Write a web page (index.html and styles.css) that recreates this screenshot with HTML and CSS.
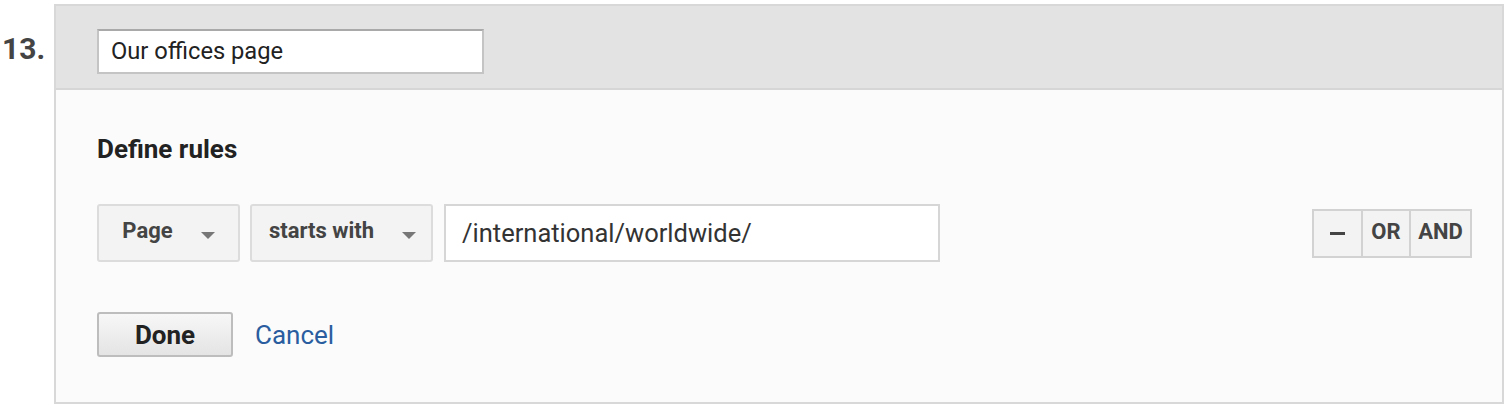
FILE: index.html
```html
<!DOCTYPE html>
<html>
<head>
<meta charset="utf-8">
<link rel="stylesheet" href="styles.css">
</head>
<body>
<div class="item">
  <div class="num">13.</div>
  <div class="panel">
    <div class="panel-head">
      <div class="name-input">Our offices page</div>
    </div>
    <div class="panel-body">
      <div class="title">Define rules</div>
      <div class="rule-row">
        <div class="select sel-page"><span>Page</span><i class="caret"></i></div>
        <div class="select sel-op"><span>starts with</span><i class="caret"></i></div>
        <div class="value-input">/international/worldwide/</div>
        <div class="spacer"></div>
        <div class="btn-group">
          <div class="gbtn minus"><i class="bar"></i></div>
          <div class="gbtn or">OR</div>
          <div class="gbtn and">AND</div>
        </div>
      </div>
      <div class="actions">
        <div class="done">Done</div>
        <a class="cancel">Cancel</a>
      </div>
    </div>
  </div>
</div>
</body>
</html>
```
FILE: styles.css
```css
html, body {
  margin: 0;
  padding: 0;
  background: #ffffff;
}
body {
  font-family: Roboto, "Liberation Sans", sans-serif;
  color: #222;
}
.item {
  display: flex;
  align-items: flex-start;
  padding-top: 4px;
}
.num {
  width: 54px;
  box-sizing: border-box;
  padding-left: 2px;
  padding-top: 28px;
  font-size: 30px;
  line-height: 34px;
  font-weight: 700;
  color: #444;
}
.panel {
  width: 1450px;
  box-sizing: border-box;
  border: 2px solid #d8d8d8;
  background: #fbfbfb;
}
.panel-head {
  background: #e3e3e3;
  border-bottom: 2px solid #d6d6d6;
  height: 82px;
  box-sizing: content-box;
  padding-left: 41px;
  display: flex;
  align-items: flex-start;
}
.name-input {
  margin-top: 23px;
  width: 387px;
  height: 45px;
  box-sizing: border-box;
  background: #fff;
  border: 2px solid #c4c4c4;
  border-top-color: #a9a9a9;
  padding-left: 12px;
  font-size: 23.7px;
  line-height: 40px;
  color: #222;
}
.panel-body {
  padding: 45px 30px 45px 41px;
}
.title {
  font-size: 26px;
  font-weight: 700;
  line-height: 28px;
  color: #222;
}
.rule-row {
  display: flex;
  align-items: center;
  margin-top: 41px;
  height: 58px;
}
.select {
  height: 58px;
  box-sizing: border-box;
  background: #f3f3f3;
  border: 2px solid #dcdcdc;
  border-radius: 3px;
  display: flex;
  align-items: center;
  justify-content: center;
  font-size: 22px;
  font-weight: 700;
  color: #444;
  padding-bottom: 6px;
}
.sel-page {
  width: 143px;
}
.sel-op {
  width: 183px;
  margin-left: 10px;
  padding-left: 2px;
}
.caret {
  display: block;
  width: 0;
  height: 0;
  border-left: 7px solid transparent;
  border-right: 7px solid transparent;
  border-top: 7px solid #777;
  margin-left: 28px;
  margin-top: 10px;
}
.value-input {
  margin-left: 11px;
  width: 496px;
  height: 58px;
  box-sizing: border-box;
  background: #fff;
  border: 2px solid #d6d6d6;
  padding-left: 16px;
  font-size: 25.5px;
  line-height: 54px;
  color: #333;
}
.spacer {
  flex: 1;
}
.btn-group {
  display: flex;
  height: 49px;
  box-sizing: border-box;
  border: 2px solid #d2d2d2;
  background: #f3f3f3;
}
.gbtn {
  display: flex;
  align-items: center;
  justify-content: center;
  font-size: 22px;
  font-weight: 700;
  color: #444;
  border-left: 2px solid #d2d2d2;
  padding-bottom: 4px;
}
.gbtn.minus {
  border-left: none;
  width: 47px;
}
.gbtn.or {
  width: 46px;
}
.gbtn.and {
  width: 59px;
}
.bar {
  display: block;
  width: 15px;
  height: 3px;
  background: #444;
  margin-top: 4px;
}
.actions {
  display: flex;
  align-items: center;
  margin-top: 50px;
}
.done {
  width: 136px;
  height: 45px;
  box-sizing: border-box;
  border: 2px solid #bdbdbd;
  border-radius: 3px;
  background: linear-gradient(#f7f7f7, #e4e4e4);
  display: flex;
  align-items: center;
  justify-content: center;
  font-size: 26px;
  font-weight: 700;
  color: #222;
}
.cancel {
  margin-left: 22px;
  font-size: 26px;
  color: #2a5d9f;
  text-decoration: none;
}
```
